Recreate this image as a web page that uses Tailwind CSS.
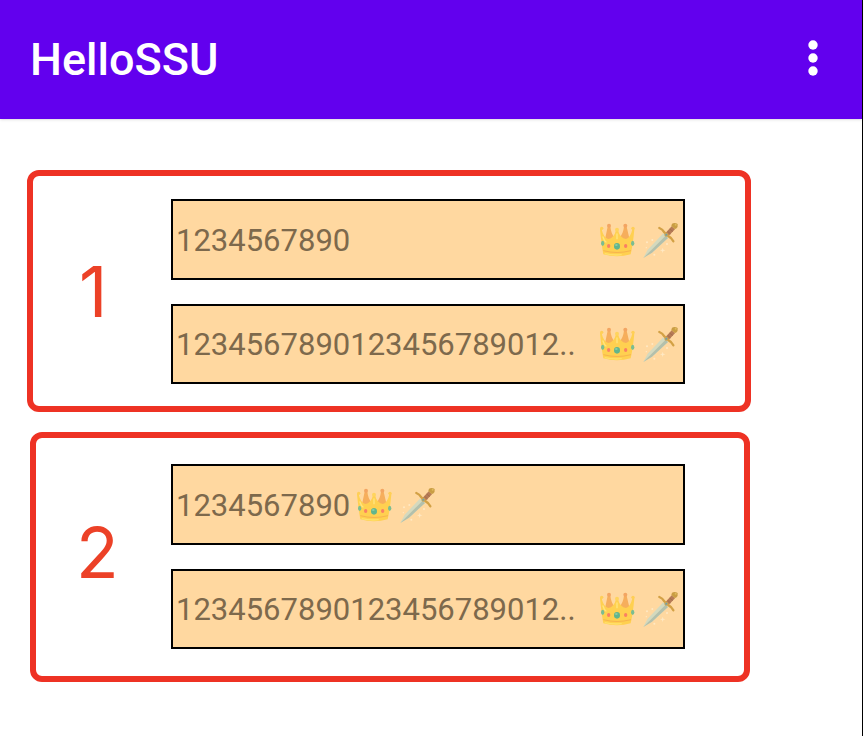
<!DOCTYPE html>
<html lang="en">
<head>
<meta charset="utf-8">
<meta name="viewport" content="width=device-width, initial-scale=1">
<title>HelloSSU</title>
<script src="https://cdn.jsdelivr.net/npm/@tailwindcss/browser@4"></script>
</head>
<body class="bg-white">
<svg class="hidden" aria-hidden="true">
  <defs>
    <symbol id="crown" viewBox="0 0 108 108">
      <path d="M12 66 L23 14 Q27 8 31 14 Q34 38 44 46 H58 Q69 38 72 14 Q76 8 80 14 L92 66Z" fill="#f6ae5c"/>
      <circle cx="27" cy="11" r="6" fill="#f3a562"/><circle cx="76" cy="11" r="6" fill="#f3a562"/>
      <path d="M4 19 Q11 49 25 51 Q42 49 48 25 H54 Q60 49 78 51 Q91 49 98 19 L103 22 Q99 68 92 97 Q51 109 10 97 Q4 65 0 22Z" fill="#ffd050"/>
      <circle cx="5" cy="19" r="5" fill="#ffcf57"/><circle cx="51" cy="23" r="6" fill="#ffd45d"/><circle cx="99" cy="19" r="5" fill="#ffcf57"/>
      <path d="M10 86 Q51 97 93 86" fill="none" stroke="#f7b34e" stroke-width="3"/>
      <path d="M14 95 Q40 101 65 98" fill="none" stroke="#ffe16d" stroke-width="4"/>
      <path d="M9 45 Q12 56 18 60 M51 36 V50" fill="none" stroke="#ffe57f" stroke-width="4" stroke-linecap="round"/>
      <ellipse cx="51" cy="73" rx="9" ry="10" fill="#62b58c"/><ellipse cx="49" cy="69" rx="4" ry="3" fill="#8acda6"/>
      <ellipse cx="8" cy="64" rx="5" ry="8" fill="#7bbd91"/><ellipse cx="98" cy="64" rx="5" ry="8" fill="#7bbd91"/>
      <ellipse cx="26" cy="72" rx="5" ry="6" fill="#fa8063"/><ellipse cx="77" cy="72" rx="5" ry="6" fill="#fa8063"/>
    </symbol>
    <symbol id="dagger" viewBox="0 0 108 108">
      <path d="M1 108 L14 83 L61 34 L75 48 L27 92Z" fill="#d4d9be"/>
      <path d="M1 108 L68 41 L75 48 L27 92Z" fill="#b3c0ac"/>
      <path d="M67 34 L86 13 L96 22 L76 43Z" fill="#b77b55"/>
      <path d="M74 28 L83 36 M80 21 L90 29" stroke="#9c694b" stroke-width="2"/>
      <path d="M87 5 Q95 0 104 6 Q106 15 99 20 L95 21 L85 12Z" fill="#c99d43"/>
      <circle cx="98" cy="8" r="3" fill="#dfb95a"/>
      <path d="M49 18 Q59 22 64 31 L77 43 Q86 47 91 58" fill="none" stroke="#d3a145" stroke-width="7" stroke-linecap="round"/>
      <circle cx="70" cy="38" r="6" fill="#c7a357"/><circle cx="70" cy="38" r="3" fill="#6da1ad"/>
      <g fill="#ffe9c4"><path d="M59 77 l2 6 6 2 -6 2 -2 6 -2 -6 -6 -2 6 -2Z"/><circle cx="28" cy="54" r="3"/><circle cx="12" cy="61" r="3"/><circle cx="10" cy="77" r="2"/><circle cx="34" cy="98" r="3"/><circle cx="72" cy="66" r="3"/></g>
    </symbol>
  </defs>
</svg>
<div class="min-h-screen border-r border-black mr-px bg-white font-['Roboto',sans-serif]">
  <header class="flex items-center justify-between bg-[#6200ee] pl-[30px] pr-8 h-[119px] shadow">
    <h1 class="text-[45px] leading-[52px] font-medium text-white">HelloSSU</h1>
    <button type="button" aria-label="More options" class="flex w-8 justify-center pb-1">
      <svg class="h-10 w-10 shrink-0" viewBox="0 0 40 40" fill="#fff"><circle cx="19" cy="7" r="4.7"/><circle cx="19" cy="20" r="4.7"/><circle cx="19" cy="33" r="4.7"/></svg>
    </button>
  </header>
  <main class="flex flex-col gap-5 pt-[51px] pl-[27px] pr-[111px]">
    <section aria-labelledby="n1" class="flex items-center rounded-xl border-[6px] border-[#ee3224] pt-[23px] pb-[22px] pr-[60px]">
      <h2 id="n1" class="w-[138px] shrink-0 pl-[46px] font-['Inter',sans-serif] text-[70px] leading-[80px] font-normal text-[#ec4127]">1</h2>
      <div class="flex min-w-0 flex-1 flex-col gap-6">
        <div class="flex h-[81px] items-center border-2 border-black bg-[#ffd8a0] pl-[3px] pr-1">
          <p class="flex-1 pt-[2px] text-[31px] leading-9 text-[#7d694c]">1234567890</p>
          <svg class="h-9 w-9" role="img" aria-label="crown"><use href="#crown"/></svg>
          <svg class="ml-[7px] h-9 w-9" role="img" aria-label="dagger"><use href="#dagger"/></svg>
        </div>
        <div class="flex h-20 items-center border-2 border-black bg-[#ffd8a0] pl-[3px] pr-1">
          <p class="flex-1 pt-[2px] text-[31px] leading-9 text-[#7d694c]">1234567890123456789012..</p>
          <svg class="h-9 w-9" role="img" aria-label="crown"><use href="#crown"/></svg>
          <svg class="ml-[7px] h-9 w-9" role="img" aria-label="dagger"><use href="#dagger"/></svg>
        </div>
      </div>
    </section>
    <section aria-labelledby="n2" class="ml-[3px] mr-px flex items-center rounded-xl border-[6px] border-[#ee3224] pt-[26px] pb-[27px] pr-[59px]">
      <h2 id="n2" class="w-[135px] shrink-0 pb-2 pl-[40px] font-['Inter',sans-serif] text-[70px] leading-[80px] font-normal text-[#ec4127]">2</h2>
      <div class="flex min-w-0 flex-1 flex-col gap-6">
        <div class="flex h-[81px] items-center border-2 border-black bg-[#ffd8a0] pl-[3px] pr-1">
          <p class="pt-[2px] text-[31px] leading-9 text-[#7d694c]">1234567890</p>
          <svg class="ml-[7px] h-9 w-9" role="img" aria-label="crown"><use href="#crown"/></svg>
          <svg class="ml-[7px] h-9 w-9" role="img" aria-label="dagger"><use href="#dagger"/></svg>
        </div>
        <div class="flex h-20 items-center border-2 border-black bg-[#ffd8a0] pl-[3px] pr-1">
          <p class="flex-1 pt-[2px] text-[31px] leading-9 text-[#7d694c]">1234567890123456789012..</p>
          <svg class="h-9 w-9" role="img" aria-label="crown"><use href="#crown"/></svg>
          <svg class="ml-[7px] h-9 w-9" role="img" aria-label="dagger"><use href="#dagger"/></svg>
        </div>
      </div>
    </section>
  </main>
</div>
</body>
</html>
